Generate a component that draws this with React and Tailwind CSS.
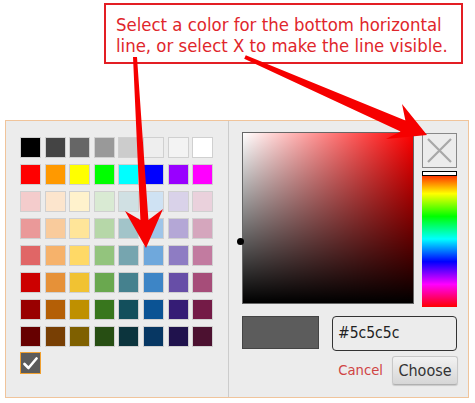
import React from 'react';

const palette = [
    ['#000000', '#444444', '#666666', '#999999', '#cccccc', '#eeeeee', '#f3f3f3', '#ffffff'],
    ['#ff0000', '#ff9900', '#ffff00', '#00ff00', '#00ffff', '#0000ff', '#9900ff', '#ff00ff'],
    ['#f4cccc', '#fce5cd', '#fff2cc', '#d9ead3', '#d0e0e3', '#cfe2f3', '#d9d2e9', '#ead1dc'],
    ['#ea9999', '#f9cb9c', '#ffe599', '#b6d7a8', '#a2c4c9', '#9fc5e8', '#b4a7d6', '#d5a6bd'],
    ['#e06666', '#f6b26b', '#ffd966', '#93c47d', '#76a5af', '#6fa8dc', '#8e7cc3', '#c27ba0'],
    ['#cc0000', '#e69138', '#f1c232', '#6aa84f', '#45818e', '#3d85c6', '#674ea7', '#a64d79'],
    ['#990000', '#b45f06', '#bf9000', '#38761d', '#134f5c', '#0b5394', '#351c75', '#741b47'],
    ['#660000', '#783f04', '#7f6000', '#274e13', '#0c343d', '#073763', '#20124d', '#4c1130'],
];

const Swatch = ({ color }) => (
    <div className="w-[21px] h-[21px] border border-[#d0d0d0]" style={{ backgroundColor: color }} />
);

// annotation arrows drawn over the picker
const Arrows = () => (
    <svg className="absolute left-0 top-0 pointer-events-none" width="475" height="403" viewBox="0 0 475 403">
        <polygon points="133,57 140.4,220 125,211 146,248 163,209 148.4,220 137,57" fill="#f60000" />
        <polygon points="245.8,55.2 405.4,120.5 402,104 427,135 386,139 400.6,131.5 244.2,58.8" fill="#f60000" />
    </svg>
);

const App = () => {
    return (
        <div className="relative w-[475px] h-[403px] bg-white overflow-hidden font-['DejaVu_Sans',sans-serif] font-stretch-condensed">
            <div className="pt-[3px] pl-[104px]">
                <div className="w-[359px] h-[61px] border-2 border-[#e31e24] pt-[9px] pl-[10px] text-[18.4px] leading-[21px] text-[#e0262b] whitespace-nowrap">
                    Select a color for the bottom horizontal
                    <br />
                    line, or select X to make the line visible.
                </div>
            </div>

            <div className="ml-[5px] mt-[56px] w-[464px] h-[278px] border border-[#f0c49b] bg-[#ececec] flex">
                {/* palette */}
                <div className="w-[223px] h-full border-r border-[#cccccc] pl-[14px] pt-[16px]">
                    <div className="grid grid-cols-[repeat(8,21px)] gap-x-[3.6px] gap-y-[6px]">
                        {palette.flat().map((c, i) => (
                            <Swatch key={i} color={c} />
                        ))}
                    </div>
                    <div className="mt-[5px] w-[21px] h-[22px] border border-[#f0a030] bg-[#5c5c5c] flex items-center justify-center">
                        <svg width="15" height="13" viewBox="0 0 15 13">
                            <path d="M1.5 7 L5.5 11 L13.5 1.5" fill="none" stroke="#fff" strokeWidth="2.6" strokeLinecap="round" strokeLinejoin="round" />
                        </svg>
                    </div>
                </div>

                {/* picker */}
                <div className="flex-1 pl-[13px] pt-[11px] pr-[10px]">
                    <div className="flex">
                        <div className="relative w-[172px] h-[172px] border border-[#666] bg-[#ff0000]">
                            <div className="absolute inset-0 bg-[linear-gradient(to_right,#fff,rgba(255,255,255,0))]" />
                            <div className="absolute inset-0 bg-[linear-gradient(to_top,#000,rgba(0,0,0,0))]" />
                            <div className="absolute left-[-6px] top-[105px] w-[7px] h-[7px] rounded-full bg-black" />
                        </div>
                        <div className="ml-[8px] mt-[1px] flex flex-col">
                            <div className="w-[35px] h-[35px] border border-[#888] flex items-center justify-center">
                                <svg width="25" height="25" viewBox="0 0 25 25">
                                    <path d="M1 1 L24 24 M24 1 L1 24" stroke="#a8a8a8" strokeWidth="2.2" />
                                </svg>
                            </div>
                            <div className="relative mt-[3px] w-[35px] h-[136px] bg-[linear-gradient(to_bottom,#f00,#ff0,#0f0,#0ff,#00f,#f0f,#f00)]">
                                <div className="absolute top-0 left-0 right-0 h-[5px] border border-black bg-white" />
                            </div>
                        </div>
                    </div>

                    <div className="mt-[9px] flex items-start">
                        <div className="w-[77px] h-[33px] border border-[#444] bg-[#5c5c5c]" />
                        <div className="ml-[13px] w-[125px] h-[35px] border border-[#333] rounded-[4px] pl-[5px] flex items-center text-[15.5px] text-[#222]">
                            #5c5c5c
                        </div>
                    </div>

                    <div className="mt-[5px] flex justify-end items-center">
                        <span className="text-[14.7px] text-[#d04444]">Cancel</span>
                        <button className="ml-[9px] w-[66px] h-[29px] rounded-[3px] border border-[#c8c8c8] border-b-[#b0b0b0] bg-[linear-gradient(to_bottom,#f2f2f2,#d6d6d6)] text-[16px] text-[#333] shadow-[0_1px_1px_rgba(0,0,0,0.15)]">
                            Choose
                        </button>
                    </div>
                </div>
            </div>

            <Arrows />
        </div>
    );
};

export default App;
